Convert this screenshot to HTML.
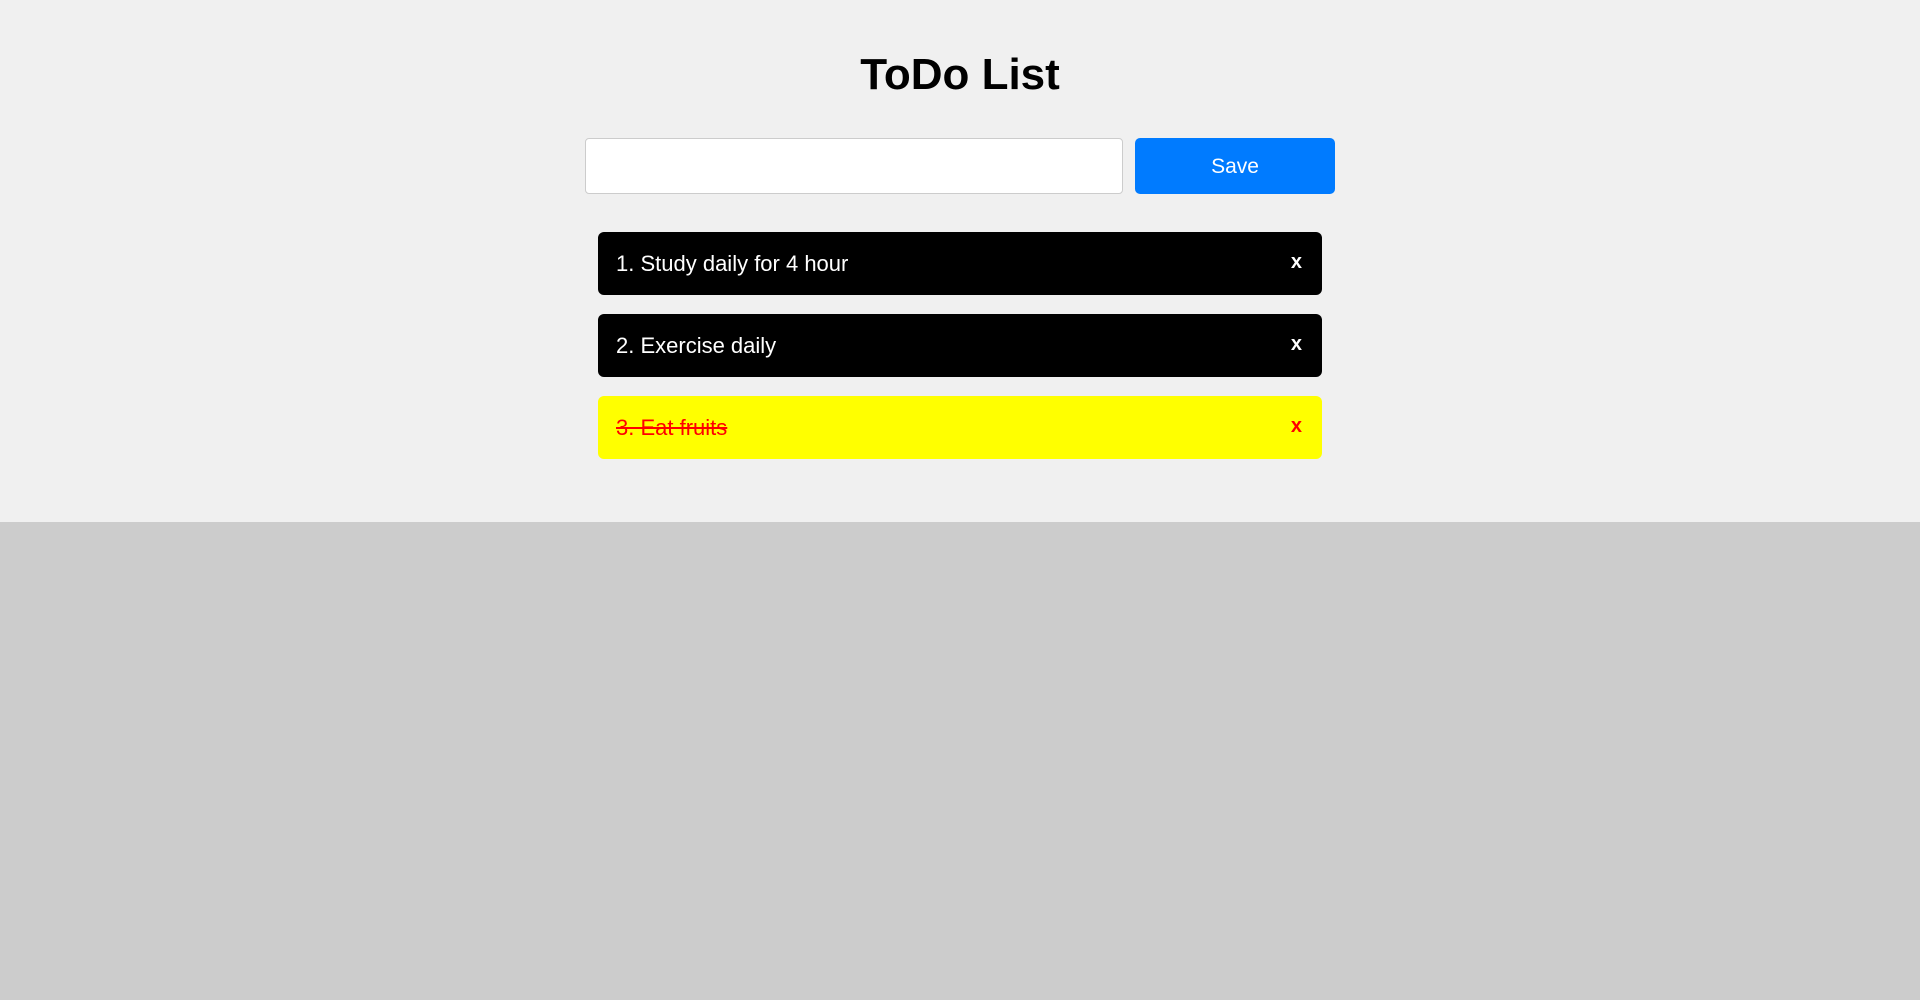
<!DOCTYPE html>
<html><head><meta charset="utf-8"><style>
html,body{margin:0;padding:0;width:1920px;height:1000px;background:#cccccc;font-family:"Liberation Sans",Arial,sans-serif;overflow:hidden}
.top{position:absolute;left:0;top:0;width:1920px;height:522px;background:#f0f0f0}
h1{position:absolute;left:0;width:1920px;top:47px;margin:0;text-align:center;font-size:44px;line-height:56px;font-weight:bold;color:#000}
.inp{position:absolute;left:585px;top:138px;width:536px;height:54px;background:#fff;border:1px solid #ccc;border-radius:4px}
.btn{position:absolute;left:1135px;top:138px;width:200px;height:56px;background:#007bff;border-radius:5px;color:#fff;font-size:21px;line-height:57px;text-align:center}
.item{position:absolute;left:598px;width:724px;height:63px;border-radius:6px;background:#000;color:#fff;font-size:22px;line-height:63px}
.item span{position:absolute;left:18px}
.item b{position:absolute;right:20px;font-weight:bold;font-size:20px;top:-1px}
.done{background:#ff0;color:#f00}
.done span{text-decoration:line-through}
</style></head><body>
<div class="top">
<h1>ToDo List</h1>
<div class="inp"></div>
<div class="btn">Save</div>
<div class="item" style="top:232px"><span>1. Study daily for 4 hour</span><b>x</b></div>
<div class="item" style="top:314px"><span>2. Exercise daily</span><b>x</b></div>
<div class="item done" style="top:396px"><span>3. Eat fruits</span><b>x</b></div>
</div>
</body></html>
